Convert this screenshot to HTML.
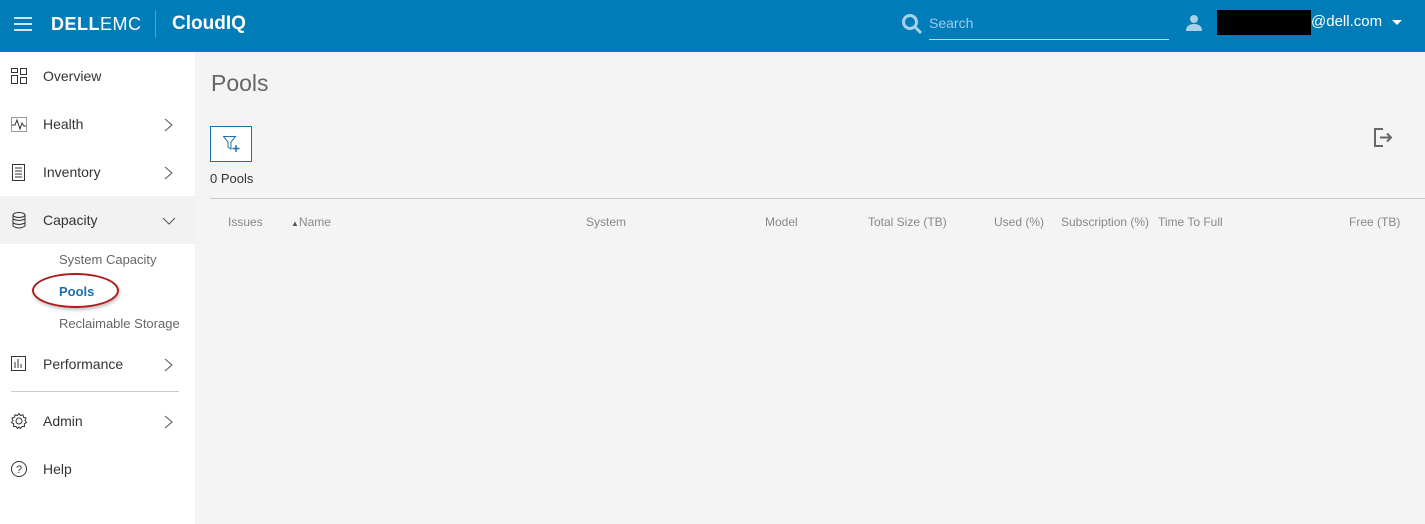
<!DOCTYPE html>
<html><head><style>
*{box-sizing:border-box;margin:0;padding:0}
body{width:1425px;height:524px;overflow:hidden;font-family:"Liberation Sans",sans-serif;background:#f4f4f4;position:relative}
.top{position:absolute;left:0;top:0;width:1425px;height:52px;background:#007db8;color:#fff}
.side{position:absolute;left:0;top:52px;width:195px;height:472px;background:#fff}
.item{position:absolute;left:0;width:195px;height:48px;font-size:14px;color:#333}
.item span{position:absolute;left:43px;top:16px}
.item svg{position:absolute}
.chev{position:absolute;left:164px;top:18px}
.sub{position:absolute;left:59px;font-size:13px;color:#666}
.th{position:absolute;top:215px;font-size:12px;color:#888}
</style></head><body>
<div class="top">
 <svg style="position:absolute;left:14px;top:17px" width="18" height="14"><rect y="0" width="18" height="2" fill="#cfe6f2"/><rect y="6" width="18" height="2" fill="#cfe6f2"/><rect y="12" width="18" height="2" fill="#cfe6f2"/></svg>
 <div style="position:absolute;left:51px;top:14px;font-size:18px;font-weight:bold;letter-spacing:0.5px">DELL<span style="font-weight:normal">EMC</span></div>
 <div style="position:absolute;left:155px;top:10px;width:1px;height:28px;background:#4da3cc"></div>
 <div style="position:absolute;left:172px;top:13px;font-size:19px;font-weight:bold">CloudIQ</div>
 <svg style="position:absolute;left:901px;top:13px" width="22" height="22"><circle cx="9" cy="9" r="6.5" stroke="#a8d2ea" stroke-width="3" fill="none"/><line x1="14" y1="14" x2="20" y2="20" stroke="#a8d2ea" stroke-width="3"/></svg>
 <div style="position:absolute;left:929px;top:15px;font-size:14px;color:#9fcbe5">Search</div>
 <div style="position:absolute;left:929px;top:39px;width:240px;height:1px;background:#b8dbef"></div>
 <svg style="position:absolute;left:1185px;top:14px" width="18" height="18"><circle cx="9" cy="5" r="4" fill="#a8d2ea"/><path d="M1 17 Q1 10 9 10 Q17 10 17 17Z" fill="#a8d2ea"/></svg>
 <div style="position:absolute;left:1217px;top:10px;width:94px;height:25px;background:#000"></div>
 <div style="position:absolute;left:1311px;top:13px;font-size:15px">@dell.com</div>
 <svg style="position:absolute;left:1392px;top:20px" width="10" height="6"><path d="M0 0H10L5 5Z" fill="#fff"/></svg>
</div>
<div class="side">
 <div class="item" style="top:0"><svg style="left:11px;top:16px" width="16" height="16" fill="none" stroke="#333"><rect x="0.5" y="0.5" width="6" height="4"/><rect x="9.5" y="0.5" width="6" height="6"/><rect x="0.5" y="7.5" width="6" height="8"/><rect x="9.5" y="9.5" width="6" height="6"/></svg><span>Overview</span></div>
 <div class="item" style="top:48px"><svg style="left:11px;top:17px" width="16" height="15" fill="none" stroke="#333"><rect x="0.5" y="0.5" width="15" height="14" stroke="#999"/><path d="M1 8H4L6 3L9 12L11 6L13 9H15"/></svg><span>Health</span><svg class="chev" width="10" height="14"><path d="M1 1L8 7L1 13" stroke="#555" fill="none"/></svg></div>
 <div class="item" style="top:96px"><svg style="left:12px;top:16px" width="13" height="17" fill="none" stroke="#333"><rect x="0.5" y="0.5" width="12" height="16"/><path d="M3 4H10M3 7H10M3 10H10M3 13H10"/></svg><span>Inventory</span><svg class="chev" width="10" height="14"><path d="M1 1L8 7L1 13" stroke="#555" fill="none"/></svg></div>
 <div class="item" style="top:144px;background:#f2f2f2"><svg style="left:12px;top:16px" width="14" height="17" fill="none" stroke="#333"><ellipse cx="7" cy="3" rx="6" ry="2.5"/><path d="M1 3V14Q7 18 13 14V3M1 7Q7 10 13 7M1 11Q7 14 13 11"/></svg><span>Capacity</span><svg style="position:absolute;left:162px;top:21px" width="14" height="9"><path d="M1 1L7 7L13 1" stroke="#555" fill="none"/></svg></div>
 <div class="sub" style="top:200px">System Capacity</div>
 <div class="sub" style="top:232px;color:#1a73a8;font-weight:bold">Pools</div>
 <div style="position:absolute;left:32px;top:221px;width:87px;height:35px;border:2px solid #b01a1a;border-radius:50%;box-shadow:1px 2px 3px rgba(0,0,0,.25)"></div>
 <div class="sub" style="top:264px">Reclaimable Storage</div>
 <div class="item" style="top:288px"><svg style="left:11px;top:16px" width="15" height="15" fill="none" stroke="#333"><rect x="0.5" y="0.5" width="14" height="14"/><path d="M4 12V6M7 12V3M10 12V8"/></svg><span>Performance</span><svg class="chev" width="10" height="14"><path d="M1 1L8 7L1 13" stroke="#555" fill="none"/></svg></div>
 <div style="position:absolute;left:11px;top:339px;width:168px;height:1px;background:#ccc"></div>
 <div class="item" style="top:345px"><svg style="left:10px;top:15px" width="18" height="18" fill="none" stroke="#333"><circle cx="9" cy="9" r="3"/><path d="M9 1.5L10.5 3.5L13 2.8L13.5 5.3L16 6L15 8.5L16.5 10.5L14.3 11.8L14.5 14.5L12 14.5L10.5 16.5L9 15L7.5 16.5L6 14.5L3.5 14.5L3.7 11.8L1.5 10.5L3 8.5L2 6L4.5 5.3L5 2.8L7.5 3.5Z"/></svg><span>Admin</span><svg class="chev" width="10" height="14"><path d="M1 1L8 7L1 13" stroke="#555" fill="none"/></svg></div>
 <div class="item" style="top:393px"><svg style="left:10px;top:15px" width="18" height="18" fill="none" stroke="#333"><circle cx="9" cy="9" r="7.5"/><text x="9" y="13" font-size="11" text-anchor="middle" fill="#333" stroke="none" font-family="Liberation Sans">?</text></svg><span>Help</span></div>
</div>
<div style="position:absolute;left:211px;top:70px;font-size:23px;color:#666">Pools</div>
<div style="position:absolute;left:210px;top:126px;width:42px;height:36px;border:1px solid #1a73a8;background:#fff"><svg style="position:absolute;left:12px;top:9px" width="20" height="17" fill="none" stroke="#1a73a8"><path d="M0.5 0.5H12.5L8 6V13L5 11V6Z"/><path d="M13 9V16M9.5 12.5H16.5" stroke-width="1.5"/></svg></div>
<div style="position:absolute;left:210px;top:171px;font-size:13px;color:#333">0 Pools</div>
<svg style="position:absolute;left:1374px;top:128px" width="20" height="20" fill="none" stroke="#666" stroke-width="2"><path d="M9 1H1V18H9M6 9.5H17M13 5.5L17 9.5L13 13.5"/></svg>
<div style="position:absolute;left:210px;top:198px;width:1215px;height:1px;background:#ccc"></div>
<div class="th" style="left:228px">Issues</div>
<div class="th" style="left:291px"><span style="font-size:8px;color:#555">▲</span>Name</div>
<div class="th" style="left:586px">System</div>
<div class="th" style="left:765px">Model</div>
<div class="th" style="left:868px">Total Size (TB)</div>
<div class="th" style="left:994px">Used (%)</div>
<div class="th" style="left:1061px">Subscription (%)</div>
<div class="th" style="left:1158px">Time To Full</div>
<div class="th" style="left:1349px">Free (TB)</div>
</body></html>
